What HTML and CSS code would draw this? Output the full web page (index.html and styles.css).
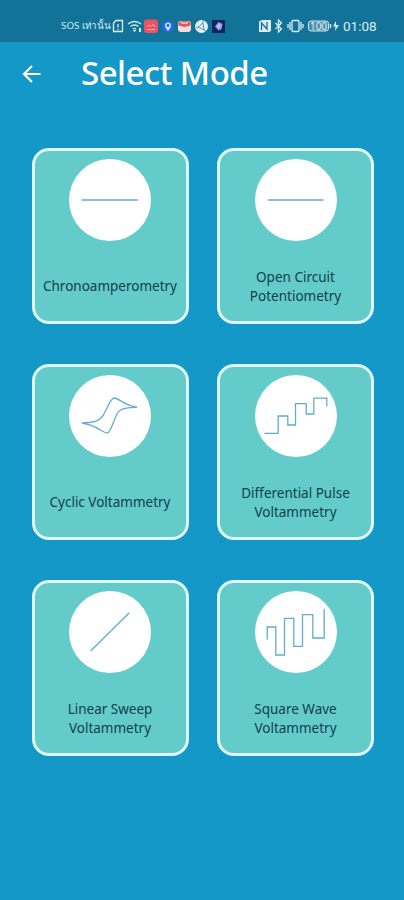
FILE: index.html
```
<!DOCTYPE html>
<html lang="en">
  <head>
    <meta charset="UTF-8" />
    <meta name="viewport" content="width=device-width, initial-scale=1.0" />
    <title>Select Mode</title>
    <link rel="stylesheet" href="styles.css">
  </head>
  <body>
    <!-- Status bar -->
    <div class="status-bar">
      <span class="carrier">SOS เท่านั้น</span>
      <svg class="status-left" width="116" height="16" viewBox="0 0 116 16">
        <path class="thin" d="M5 2.5h6.5v11h-9V5zM7 6v3.500M7 11v1" />
        <path class="thin" d="M17 6q6.500-5 13 0M19.500 8.500q4-3 8 0M22 11q1.500-1.200 3 0" />
        <path class="fill" d="M23.500 14l2-2h-4zM28 10h2v4h-2z" />
        <rect x="33" y="1.500" width="14" height="13.500" rx="3" fill="#ee5262" />
        <path d="M36 9l2-2 2 1.500 2-2 2 2.500M36 11.500h8" fill="none" stroke="#ffb6b9" />
        <circle cx="57" cy="8.500" r="6" fill="#2567eb" />
        <path d="M57 13c-5-5-3-8.500 0-8.500s5 3.500 0 8.500z" fill="#c7dcff" />
        <circle cx="57" cy="7.500" r="1.400" fill="#2567eb" />
        <rect x="67" y="3" width="13" height="11" rx="3" fill="#f3dcdc" />
        <path d="M67.500 4.500l6-2 6 2v3l-6 1.500-6-1.500z" fill="#df5860" />
        <path d="M70 5h7" stroke="#fff" />
        <circle cx="90.500" cy="8.500" r="6.500" fill="#e6f2f5" />
        <path d="M87 9l5-4 1 7zM92 5V2M87 9l-2 1M93 12l2 1" fill="none" stroke="#4d96ae" />
        <rect x="101" y="2" width="13" height="13" fill="#102366" />
        <path d="M107.500 4l4 2-1 5-3 1.500-3.500-4z" fill="#8fa7e8" />
        <path d="M107.500 6l2 2-2 2-1-2z" fill="#e2c4e6" />
      </svg>
      <svg class="status-right" width="82" height="16" viewBox="0 0 82 16">
        <path class="fill" d="M1 3.500l3-1.500h9v11l-2 1H1z" />
        <path d="M3.500 12V5l5.500 6V4" fill="none" stroke="#127198" stroke-width="1.300" />
        <path class="thin" d="M17.500 5l6 6-3 3V2l3 3-6 6" />
        <rect class="thin" x="34" y="2.500" width="7" height="11" rx="1" />
        <path class="thin" d="M32 4v8M43 4v8M30 6v4M45 6v4" />
        <rect x="50.500" y="3" width="20" height="10" rx="2.500" fill="#4b8fac" stroke="#d7e9f0" />
        <path class="thin" d="M72.500 6v4" />
        <text class="battery" x="60.500" y="11.500">100</text>
        <path class="fill" d="M78 3l-3 5.500h2.500L77 13l4-6h-3z" />
      </svg>
      <span class="clock">01:08</span>
    </div>

    <!-- Header -->
    <header class="header">
      <svg class="back" width="20" height="20" viewBox="0 0 20 20">
        <path d="M18.500 10H2M10 2L2 10l8 8" />
      </svg>
      <h1>Select Mode</h1>
    </header>

    <!-- Modes -->
    <main class="modes">
      <div class="card">
        <svg class="icon" viewBox="0 0 82 82"><path d="M12.700 41h56" /></svg>
        <p class="label">Chronoamperometry</p>
      </div>
      <div class="card">
        <svg class="icon" viewBox="0 0 82 82"><path d="M12.700 41h56" /></svg>
        <p class="label">Open Circuit<br />Potentiometry</p>
      </div>
      <div class="card">
        <svg class="icon" viewBox="0 0 82 82">
          <path d="M13 48C24 47 29 47 33 42C38 35 41 23 45.300 23C50 23 54 30 68 32.300C56 33 52 33 48.500 38C44 46 42 58 38.300 58C33 58 28 50 13 48z" />
        </svg>
        <p class="label">Cyclic Voltammetry</p>
      </div>
      <div class="card">
        <svg class="icon" viewBox="0 0 82 82">
          <path d="M9.500 58.400H23.200V41H32.800V50H40.500V28.700H51.200V39H58.800V23.200H71.800V31.500" />
        </svg>
        <p class="label">Differential Pulse<br />Voltammetry</p>
      </div>
      <div class="card">
        <svg class="icon" viewBox="0 0 82 82"><path d="M21.700 60L60.300 21.700" /></svg>
        <p class="label">Linear Sweep<br />Voltammetry</p>
      </div>
      <div class="card">
        <svg class="icon" viewBox="0 0 82 82">
          <path d="M12.200 48.500V36H20.800V64H29.500V27.300H38.800V55.300H47.500V23.700H57.800V47H69.200V17.700" />
        </svg>
        <p class="label">Square Wave<br />Voltammetry</p>
      </div>
    </main>
  </body>
</html>
```

FILE: styles.css
```
* {
  box-sizing: border-box;
  margin: 0;
  padding: 0;
}

body {
  font-family: "Noto Sans", "Open Sans", sans-serif;
  background-color: #1398c8;
  min-height: 900px;
}

.status-bar {
  display: flex;
  align-items: center;
  height: 42px;
  padding: 10px 0 0 61px;
  background-color: #117397;
  color: #d9edf4;
}

.carrier {
  width: 50px;
  font-size: 9.8px;
  line-height: 16px;
  white-space: nowrap;
}

.status-left {
  flex: none;
}

.status-right {
  flex: none;
  margin-left: 31px;
}

.thin {
  fill: none;
  stroke: #d9edf4;
  stroke-width: 1.3;
}

.fill {
  fill: #d9edf4;
}

.battery {
  fill: #e2f1f6;
  font-size: 10px;
  text-anchor: middle;
}

.clock {
  margin-left: 3px;
  font-family: Roboto, sans-serif;
  font-size: 13.5px;
  line-height: 16px;
}

.header {
  display: flex;
  align-items: center;
  height: 63px;
  padding-left: 22px;
}

.back {
  fill: none;
  stroke: #fff;
  stroke-width: 2.2;
}

.header h1 {
  margin: 0 0 2px 39px;
  color: #fff;
  font-size: 33px;
  font-weight: 500;
  letter-spacing: -0.5px;
  line-height: 40px;
  white-space: nowrap;
}

.modes {
  display: grid;
  grid-template-columns: 157px 157px;
  grid-auto-rows: 176.5px;
  gap: 39.7px 28.5px;
  padding: 42.5px 0 0 31.5px;
}

.card {
  display: flex;
  flex-direction: column;
  align-items: center;
  padding-top: 8px;
  background-color: #63cbca;
  border: 3px solid #e0f8fb;
  border-radius: 17px;
}

.icon {
  flex: none;
  width: 82px;
  height: 82px;
  background-color: #fff;
  border-radius: 50%;
}

.icon path {
  fill: none;
  stroke: #62acd0;
  stroke-width: 1.3;
}

.label {
  display: flex;
  flex: none;
  align-items: center;
  height: 90px;
  padding-top: 2px;
  color: #103f4b;
  font-size: 13.5px;
  line-height: 19px;
  text-align: center;
  white-space: nowrap;
}
```
